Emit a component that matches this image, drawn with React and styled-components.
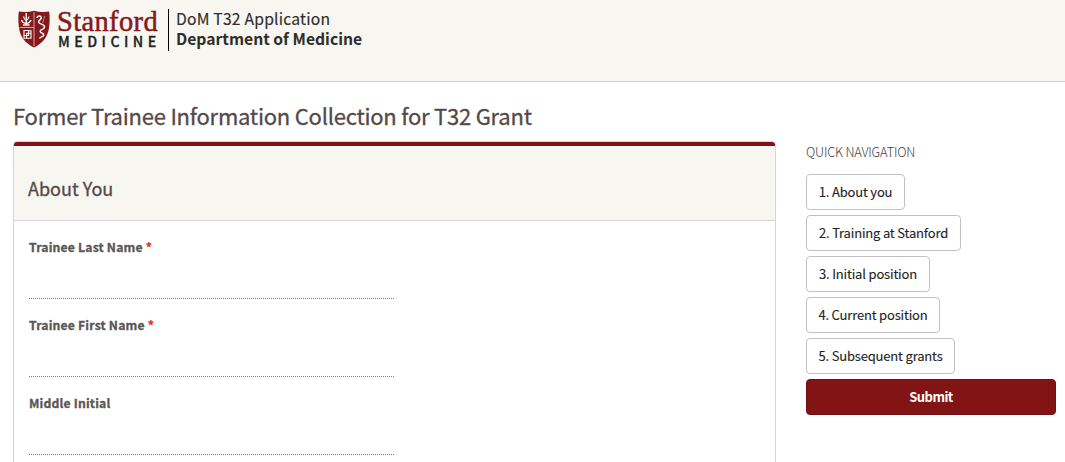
import React from "react";
import styled, { createGlobalStyle } from "styled-components";

const GlobalStyle = createGlobalStyle`
  *, *::before, *::after { box-sizing: border-box; }
  html, body { margin: 0; height: 462px; overflow: hidden; background: #fff; }
  body { font-family: "Noto Sans CJK SC", "Noto Sans", sans-serif; color: #2e2d29; }
`;

const Header = styled.header`
  display: flex;
  align-items: flex-start;
  height: 82px;
  padding: 9px 0 0 18px;
  background: #f7f6f1;
  border-bottom: 1px solid #d5d0cb;
`;

const Shield = styled.svg`
  width: 32px;
  height: 38px;
  margin-top: 1px;
  flex: none;
`;

const Wordmark = styled.div`
  width: 102px;
  height: 42px;
  margin-left: 7px;
  white-space: nowrap;
`;

const WordmarkName = styled.div`
  font-family: "Liberation Serif", serif;
  font-size: 28.4px;
  line-height: 26px;
  height: 25px;
  letter-spacing: 0.4px;
  color: #85181b;
  -webkit-text-stroke: 0.5px #85181b;
`;

const WordmarkUnit = styled.div`
  font-size: 14.2px;
  font-weight: 500;
  line-height: 14px;
  letter-spacing: 4.45px;
  padding-left: 1px;
  color: #222;
  -webkit-text-stroke: 0.3px currentColor;
`;

const Lockup = styled.div`
  height: 42px;
  margin-left: 9px;
  padding-left: 7px;
  border-left: 1px solid #000;
  font-size: 15.7px;
  line-height: 20px;
  white-space: nowrap;
`;

const AppName = styled.div`
  font-weight: ${(p) => (p.$bold ? 700 : 400)};
  letter-spacing: ${(p) => (p.$bold ? "0" : "0.2px")};
  -webkit-text-stroke: ${(p) => (p.$bold ? "0" : "0.15px currentColor")};
`;

const Main = styled.main`
  display: flex;
  align-items: flex-start;
  padding: 17px 9px 0 13px;
`;

const FormColumn = styled.div`
  width: 763px;
  flex: none;
`;

const Title = styled.h1`
  margin: 0 0 10px;
  font-size: 22px;
  font-weight: 400;
  line-height: 32px;
  letter-spacing: -0.23px;
  color: #544948;
  -webkit-text-stroke: 0.3px currentColor;
  white-space: nowrap;
`;

const Panel = styled.section`
  height: 340px;
  border: 1px solid #d5d5d4;
  border-radius: 4px;
  overflow: hidden;
`;

const PanelHeader = styled.div`
  height: 79px;
  padding: 27px 14px 0;
  border-top: 4px solid #820f15;
  border-bottom: 1px solid #d5d5d4;
  background: #f7f6f1;
`;

const PanelTitle = styled.h2`
  margin: 0;
  font-size: 18px;
  font-weight: 400;
  line-height: 30px;
  color: #544948;
  -webkit-text-stroke: 0.3px currentColor;
`;

const Fields = styled.div`
  padding: 16px 15px;
`;

const Field = styled.label`
  display: block;
  width: 365px;
  height: 78px;
  font-size: 12.2px;
  font-weight: 700;
  line-height: 20px;
  letter-spacing: 0.18px;
  color: #5b5653;
  -webkit-text-stroke: 0.3px currentColor;
`;

const Required = styled.span`
  color: #d93a2b;
`;

const Input = styled.input`
  display: block;
  width: 365px;
  height: 42px;
  padding: 0;
  border: 0;
  border-bottom: 1px dotted #7b7b7b;
  background: transparent;
  outline: 0;
`;

const Sidebar = styled.aside`
  display: flex;
  flex-direction: column;
  align-items: flex-start;
  gap: 5px;
  width: 250px;
  margin-left: 30px;
  padding-top: 43px;
`;

const NavHeading = styled.div`
  height: 27px;
  font-size: 12.8px;
  font-weight: 300;
  line-height: 20px;
  letter-spacing: -0.2px;
  color: #3f4145;
  text-transform: uppercase;
`;

const NavButton = styled.button`
  width: ${(p) => p.$width};
  height: 36px;
  padding: 0 0 1px;
  border: 1px solid ${(p) => (p.$primary ? "#701012" : "#c2c2c2")};
  border-radius: 4px;
  background: ${(p) => (p.$primary ? "#821415" : "#fff")};
  color: ${(p) => (p.$primary ? "#fff" : "#222")};
  font: ${(p) => (p.$primary ? 700 : 400)} 13px/20px "Noto Sans CJK SC", sans-serif;
  letter-spacing: ${(p) => (p.$primary ? "-0.5px" : "-0.18px")};
  -webkit-text-stroke: ${(p) => (p.$primary ? "0" : "0.1px currentColor")};
  white-space: nowrap;
`;

const FIELDS = [
  { label: "Trainee Last Name", required: true },
  { label: "Trainee First Name", required: true },
  { label: "Middle Initial", required: false },
];

const LINKS = [
  ["1. About you", "99px"],
  ["2. Training at Stanford", "155px"],
  ["3. Initial position", "124px"],
  ["4. Current position", "134px"],
  ["5. Subsequent grants", "149px"],
];

const ShieldLogo = () => (
  <Shield viewBox="0 0 31 38" preserveAspectRatio="none" aria-hidden="true">
    <path
      d="M.8 1.500Q8.500 2.800 15.500.700Q22.500 2.800 30.200 1.500Q31.200 9.500 30.100 17.500C28.800 27.500 23.500 33.500 15.500 37.500C7.500 33.500 2.200 27.500.9 17.500Q-.2 9.500.8 1.500Z"
      fill="#85181b"
    />
    <path d="M15.500 2V36M1.500 17.500H15.500" stroke="#d9b3b0" strokeWidth="0.900" fill="none" />
    <g stroke="#f7f6f1" fill="none">
      <path d="M8 3V15M4.800 15H11.200" strokeWidth="1.400" />
      <path d="M8 13.500Q4.500 13 3.300 10M8 13.500Q11.500 13 12.700 10M8 10.500Q5.800 9.500 5.400 6.500M8 10.500Q10.200 9.500 10.600 6.500" strokeWidth="1.200" />
      <path d="M5.800 20.500H10.200V25.500H5.800ZM8.300 23.200H12.600V28.200H8.300ZM10.200 20.800H12.600V23.200M5.800 25.500V28.200H8.300" strokeWidth="1.100" />
      <path d="M18.400 8C18.600 5.600 22.300 5.300 22.500 7.800C22.700 10 19.300 9.800 20 12.300C20.800 14.600 25.800 13.800 25.700 17C25.600 19.800 21.300 19.100 21.500 21.500C21.700 23.400 25.200 22.700 24.900 25.200C24.700 27.300 21.600 26.400 20.900 28.400" strokeWidth="1.500" />
      <path d="M25.800 6L24 13" strokeWidth="0.500" />
    </g>
  </Shield>
);

export default function App() {
  return (
    <>
      <GlobalStyle />
      <Header>
        <ShieldLogo />
        <Wordmark>
          <WordmarkName>Stanford</WordmarkName>
          <WordmarkUnit>MEDICINE</WordmarkUnit>
        </Wordmark>
        <Lockup>
          <AppName>DoM T32 Application</AppName>
          <AppName $bold>Department of Medicine</AppName>
        </Lockup>
      </Header>
      <Main>
        <FormColumn>
          <Title>Former Trainee Information Collection for T32 Grant</Title>
          <Panel>
            <PanelHeader>
              <PanelTitle>About You</PanelTitle>
            </PanelHeader>
            <Fields>
              {FIELDS.map((f) => (
                <Field key={f.label}>
                  {f.label} {f.required && <Required>*</Required>}
                  <Input type="text" />
                </Field>
              ))}
            </Fields>
          </Panel>
        </FormColumn>
        <Sidebar>
          <NavHeading>Quick Navigation</NavHeading>
          {LINKS.map(([text, width]) => (
            <NavButton key={text} $width={width}>
              {text}
            </NavButton>
          ))}
          <NavButton $primary $width="250px">
            Submit
          </NavButton>
        </Sidebar>
      </Main>
    </>
  );
}
